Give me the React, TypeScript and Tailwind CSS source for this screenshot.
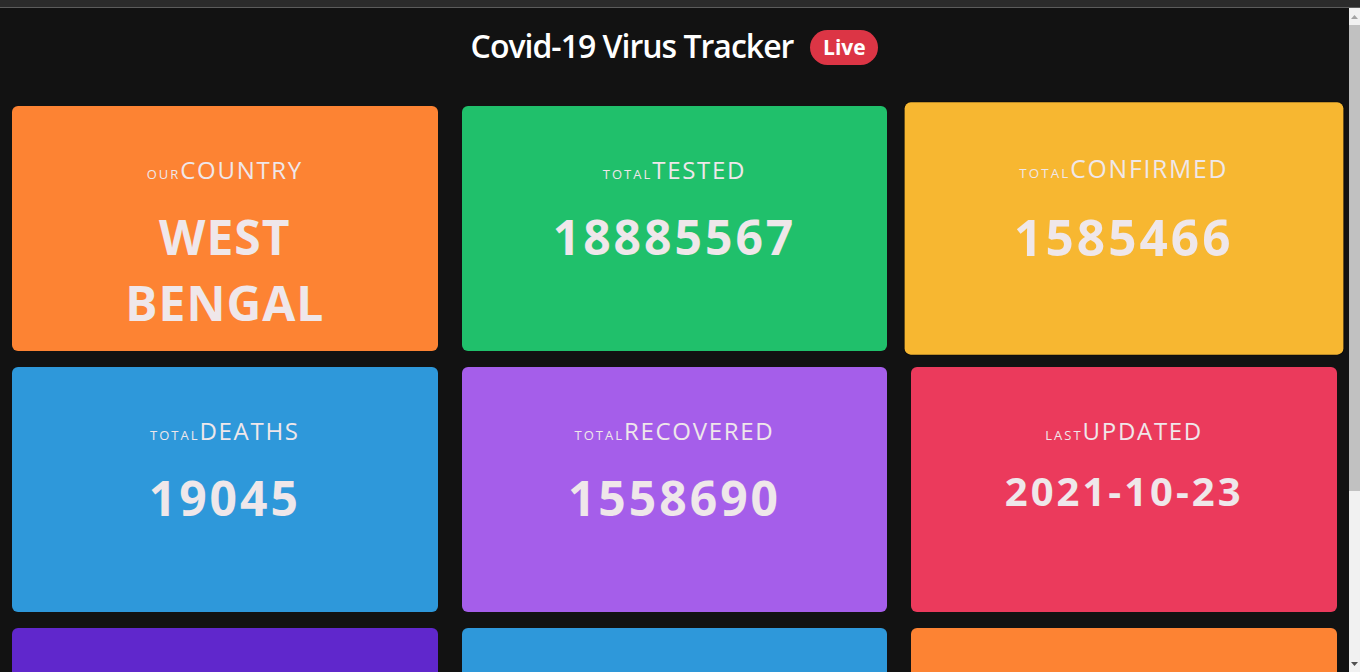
import React from "react";

type Stat = {
  small: string;
  big: string;
  value: string[];
  bg: string;
  date?: boolean;
  words?: boolean;
  lifted?: boolean;
};

const stats: Stat[] = [
  { small: "our", big: "country", value: ["WEST", "BENGAL"], bg: "bg-[#fd8333]", words: true },
  { small: "total", big: "tested", value: ["18885567"], bg: "bg-[#20c06b]" },
  { small: "total", big: "confirmed", value: ["1585466"], bg: "bg-[#f7b731]", lifted: true },
  { small: "total", big: "deaths", value: ["19045"], bg: "bg-[#2e98da]" },
  { small: "total", big: "recovered", value: ["1558690"], bg: "bg-[#a55eea]" },
  { small: "last", big: "updated", value: ["2021-10-23"], bg: "bg-[#eb3a5c]", date: true },
];

const moreCards = ["bg-[#6027cc]", "bg-[#2e98da]", "bg-[#fd8333]"];

function StatCard({ s }: { s: Stat }) {
  return (
    <div
      className={`${s.bg} h-[245px] rounded-md flex flex-col items-center pt-[48px] text-center text-[#efe7ea] ${
        s.lifted ? "scale-[1.03] shadow-[0_0_0_1px_rgba(0,0,0,0.25)]" : ""
      }`}
    >
      <p className="text-[24px] leading-8 uppercase tracking-[1.7px]">
        <span className="text-[13px] tracking-[2px]">{s.small}</span>
        {s.big}
      </p>
      {s.date ? (
        <h2 className="mt-[14px] text-[40px] leading-[52px] font-bold tracking-[3px]">{s.value[0]}</h2>
      ) : (
        <h1
          className={`mt-[14px] text-[48px] leading-[66px] font-bold ${
            s.words ? "tracking-[1px]" : "tracking-[3px]"
          }`}
        >
          {s.value.map((v, i) => (
            <div key={i}>{v}</div>
          ))}
        </h1>
      )}
    </div>
  );
}

function Scrollbar() {
  return (
    <div className="w-[11px] bg-[#f1f1f1] flex flex-col">
      <div className="h-[17px] flex items-center justify-center">
        <svg width="7" height="4" viewBox="0 0 7 4">
          <path d="M0 4 L3.5 0 L7 4 Z" fill="#a3a3a3" />
        </svg>
      </div>
      <div className="h-[466px] bg-[#c1c1c1]" />
      <div className="flex-1" />
      <div className="h-[17px] flex items-center justify-center">
        <svg width="7" height="4" viewBox="0 0 7 4">
          <path d="M0 0 L3.5 4 L7 0 Z" fill="#505050" />
        </svg>
      </div>
    </div>
  );
}

export default function App() {
  return (
    <div
      className="h-screen flex flex-col overflow-hidden bg-[#121212]"
      style={{ fontFamily: '"Open Sans", "Noto Sans", sans-serif' }}
    >
      <div className="h-[7px] bg-[#2b2b2b]" />
      <div className="h-px bg-[#5c5c5c]" />
      <div className="flex flex-1 min-h-0">
        <main className="flex-1 min-w-0 overflow-hidden px-3">
          <header className="h-[76px] flex items-center justify-center">
            <h2 className="text-[32px] font-semibold text-white tracking-[-1px]">Covid-19 Virus Tracker</h2>
            <span className="ml-[17px] mt-[3px] w-[68px] h-[35px] rounded-full bg-[#dc3545] text-white text-[21px] font-bold flex items-center justify-center">
              Live
            </span>
          </header>
          <div className="mt-[22px] grid grid-cols-3 gap-x-6 gap-y-4">
            {stats.map((s, i) => (
              <StatCard key={i} s={s} />
            ))}
            {moreCards.map((bg, i) => (
              <div key={"m" + i} className={`${bg} h-[245px] rounded-md`} />
            ))}
          </div>
        </main>
        <Scrollbar />
      </div>
    </div>
  );
}
